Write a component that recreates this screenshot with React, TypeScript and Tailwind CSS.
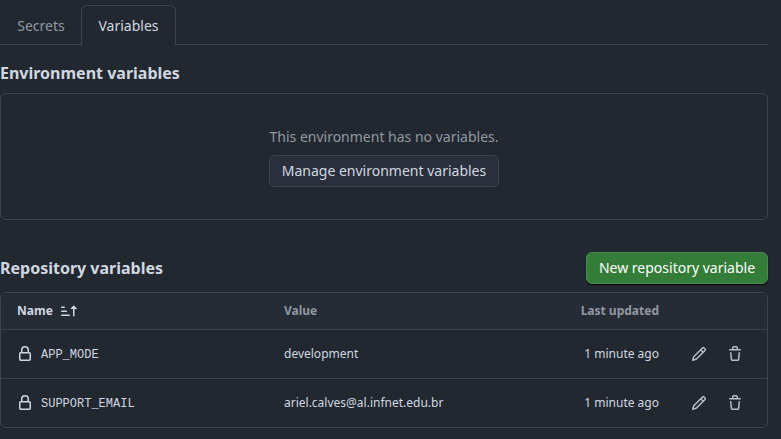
import React from "react";

const icons = {
  lock: "M4 4a4 4 0 0 1 8 0v2h.25c.966 0 1.75.784 1.75 1.75v5.5A1.75 1.75 0 0 1 12.25 15h-8.5A1.75 1.75 0 0 1 2 13.25v-5.5C2 6.784 2.784 6 3.75 6H4Zm8.25 3.5h-8.5a.25.25 0 0 0-.25.25v5.5c0 .138.112.25.25.25h8.5a.25.25 0 0 0 .25-.25v-5.5a.25.25 0 0 0-.25-.25ZM10.5 6V4a2.5 2.5 0 1 0-5 0v2Z",
  pencil:
    "M11.013 1.427a1.75 1.75 0 0 1 2.474 0l1.086 1.086a1.75 1.75 0 0 1 0 2.474l-8.61 8.61c-.21.21-.47.364-.756.445l-3.251.93a.75.75 0 0 1-.927-.928l.929-3.25c.081-.286.235-.547.445-.758l8.61-8.61Zm.176 4.823L9.75 4.81l-6.286 6.287a.253.253 0 0 0-.064.108l-.558 1.953 1.953-.558a.253.253 0 0 0 .108-.064Zm1.238-3.763a.25.25 0 0 0-.354 0L10.811 3.75l1.439 1.44 1.263-1.263a.25.25 0 0 0 0-.354Z",
  trash:
    "M11 1.75V3h2.25a.75.75 0 0 1 0 1.5H2.75a.75.75 0 0 1 0-1.5H5V1.75C5 .784 5.784 0 6.75 0h2.5C10.216 0 11 .784 11 1.75ZM4.496 6.675l.66 6.6a.25.25 0 0 0 .249.225h5.19a.25.25 0 0 0 .249-.225l.66-6.6a.75.75 0 0 1 1.492.149l-.66 6.6A1.748 1.748 0 0 1 10.595 15h-5.19a1.75 1.75 0 0 1-1.741-1.575l-.66-6.6a.75.75 0 1 1 1.492-.15ZM6.5 1.75V3h3V1.75a.25.25 0 0 0-.25-.25h-2.5a.25.25 0 0 0-.25.25Z",
  sortAsc:
    "m12.927 2.573 3 3A.25.25 0 0 1 15.75 6H13.5v6.75a.75.75 0 0 1-1.5 0V6H9.75a.25.25 0 0 1-.177-.427l3-3a.25.25 0 0 1 .354 0ZM0 12.25a.75.75 0 0 1 .75-.75h7.5a.75.75 0 0 1 0 1.5H.75a.75.75 0 0 1-.75-.75Zm0-4a.75.75 0 0 1 .75-.75h4.5a.75.75 0 0 1 0 1.5H.75A.75.75 0 0 1 0 8.25Zm0-4a.75.75 0 0 1 .75-.75h2.5a.75.75 0 0 1 0 1.5H.75A.75.75 0 0 1 0 4.25Z",
};

function Icon({ name, className = "" }: { name: keyof typeof icons; className?: string }) {
  return (
    <svg viewBox="0 0 16 16" width="16" height="16" fill="currentColor" className={`shrink-0 ${className}`}>
      <path d={icons[name]} />
    </svg>
  );
}

const variables = [
  { name: "APP_MODE", value: "development", updated: "1 minute ago" },
  { name: "SUPPORT_EMAIL", value: "ariel.calves@al.infnet.edu.br", updated: "1 minute ago" },
];

export default function App() {
  return (
    <main className="h-[439px] w-[781px] overflow-hidden bg-[#212830] pr-[13px] font-['Noto_Sans',sans-serif] text-sm text-[#d1d7e0]">
      <nav className="flex h-[45px] items-stretch pt-[5px]">
        <button className="w-[81px] border-b border-[#3d444d] pt-0.5 pl-px text-[#9198a1]">Secrets</button>
        <button className="w-[95px] rounded-t-md border border-b-0 border-[#3d444d]">Variables</button>
        <div className="flex-1 border-b border-[#3d444d]" />
      </nav>

      <h2 className="mt-4 text-base leading-6 font-bold">Environment variables</h2>
      <section className="mt-2 flex h-[127px] flex-col items-center rounded-md border border-[#3d444d] pt-8">
        <p className="leading-[21px] text-[#9198a1]">This environment has no variables.</p>
        <button className="mt-2 h-8 w-[230px] rounded-md border border-[#3d444d] bg-[#2a2f3b]">
          Manage environment variables
        </button>
      </section>

      <div className="mt-8 flex h-8 items-center justify-between">
        <h2 className="text-base leading-6 font-bold">Repository variables</h2>
        <button className="h-8 w-[182px] rounded-md border border-[#4a8c4f] bg-[#347d39] text-white shadow-[0_1px_1px_#010409]">
          New repository variable
        </button>
      </div>

      <section className="mt-2 overflow-hidden rounded-md border border-[#3d444d] text-xs">
        <div className="flex h-[37px] items-center border-b border-[#3d444d] bg-[#262c36] px-4 font-bold text-[#9198a1]">
          <div className="flex w-[267px] items-center gap-2 text-[#d1d7e0]">
            Name
            <Icon name="sortAsc" />
          </div>
          <div className="flex-1">Value</div>
          <div className="mr-[92px]">Last updated</div>
        </div>
        {variables.map((v) => (
          <div
            key={v.name}
            className="flex h-[49px] items-center border-b border-[#3d444d] px-4 last:h-12 last:border-b-0"
          >
            <div className="flex w-[267px] items-center gap-2">
              <Icon name="lock" />
              <span className="pt-0.5 font-['Liberation_Mono',monospace]">{v.name}</span>
            </div>
            <div className="flex-1">{v.value}</div>
            <div>{v.updated}</div>
            <div className="flex gap-5 pr-2 pl-8 text-[#b7bdc8]">
              <button>
                <Icon name="pencil" />
              </button>
              <button>
                <Icon name="trash" />
              </button>
            </div>
          </div>
        ))}
      </section>
    </main>
  );
}
